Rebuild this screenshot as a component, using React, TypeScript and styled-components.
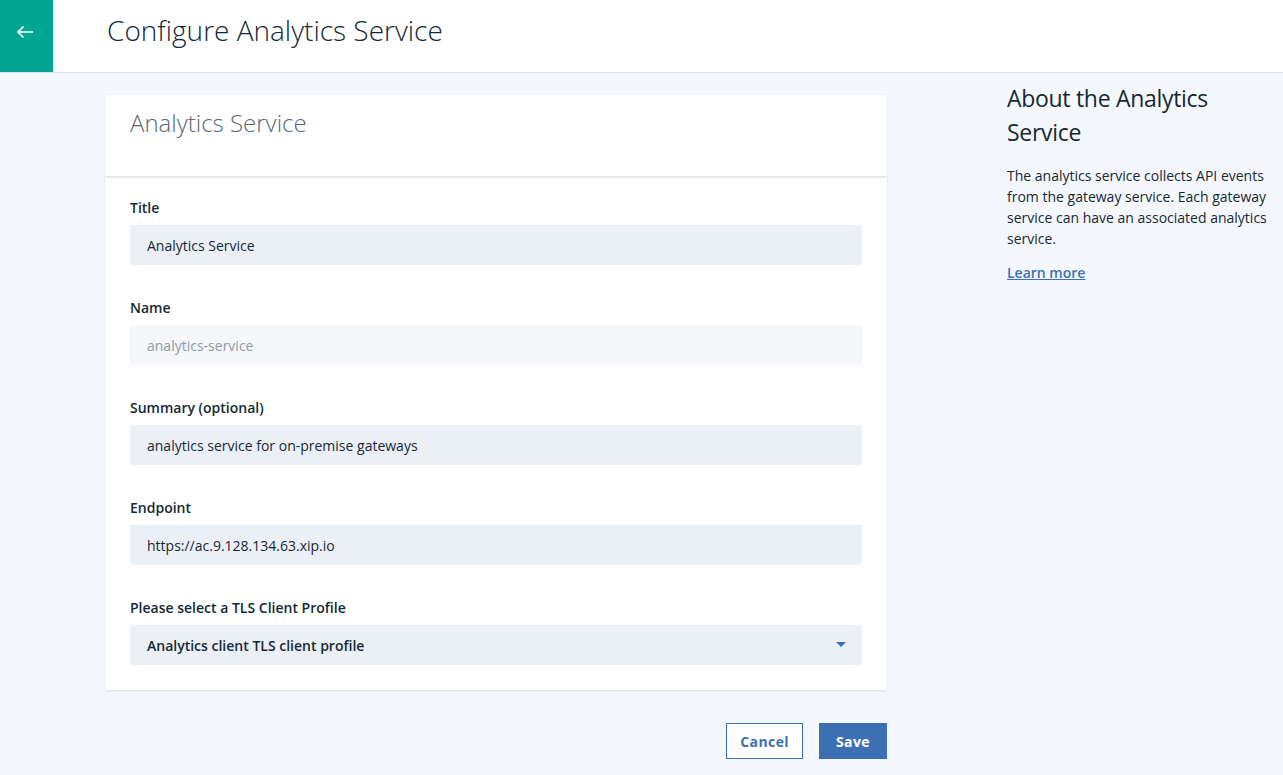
import React from 'react'
import styled, { createGlobalStyle } from 'styled-components'

const GlobalStyle = createGlobalStyle`
  html, body {
    margin: 0;
    padding: 0;
    background: #f4f7fb;
    font-family: "Open Sans", "Noto Sans", sans-serif;
    color: #152935;
  }
  * {
    box-sizing: border-box;
  }
`

const Header = styled.header`
  display: flex;
  align-items: center;
  height: 73px;
  background: #ffffff;
  border-bottom: 1px solid #dfe3e6;
`

const BackButton = styled.button`
  display: flex;
  align-items: center;
  justify-content: center;
  width: 53px;
  height: 72px;
  padding: 0 4px 8px 0;
  border: none;
  background: #00a68f;
  cursor: pointer;
`

const PageTitle = styled.h1`
  margin: 0 0 12px 54px;
  font-size: 28px;
  font-weight: 300;
  color: #152935;
`

const Main = styled.main`
  display: flex;
  align-items: flex-start;
  padding: 0 13px 0 105px;
`

const LeftColumn = styled.div`
  width: 782px;
  padding-top: 22px;
`

const Card = styled.section`
  background: #ffffff;
  box-shadow: 0 1px 2px rgba(0, 0, 0, 0.1);
`

const CardHeader = styled.div`
  height: 83px;
  padding: 11px 25px 0;
  border-bottom: 2px solid #e6e9ec;
`

const CardTitle = styled.h2`
  margin: 0;
  font-size: 24px;
  font-weight: 300;
  color: #5a6872;
`

const CardBody = styled.div`
  padding: 21px 25px 25px;
`

const Field = styled.div`
  margin-bottom: 34px;
  &:last-child {
    margin-bottom: 0;
  }
`

const Label = styled.label`
  display: block;
  margin-bottom: 8px;
  font-size: 14px;
  line-height: 18px;
  font-weight: 600;
  color: #152935;
`

const Input = styled.input<{ $muted?: boolean }>`
  display: block;
  width: 100%;
  height: 40px;
  padding: 0 17px;
  border: none;
  outline: none;
  font-family: inherit;
  font-size: 14px;
  color: ${(p) => (p.$muted ? '#8c9ba5' : '#152935')};
  background: ${(p) => (p.$muted ? '#f5f7fa' : '#ebf0f7')};
`

const Select = styled.div`
  display: flex;
  align-items: center;
  justify-content: space-between;
  height: 40px;
  padding: 0 16px 0 17px;
  background: #ebf0f7;
  font-size: 14px;
  font-weight: 600;
  color: #152935;
`

const Actions = styled.div`
  display: flex;
  justify-content: flex-end;
  gap: 16px;
  margin-top: 33px;
`

const Button = styled.button<{ $primary?: boolean }>`
  height: 36px;
  padding: ${(p) => (p.$primary ? '0 16px' : '0 13px')};
  font-family: inherit;
  font-size: 14px;
  font-weight: 700;
  letter-spacing: 0.4px;
  cursor: pointer;
  border: 1px solid #3d70b2;
  color: ${(p) => (p.$primary ? '#ffffff' : '#3d70b2')};
  background: ${(p) => (p.$primary ? '#3d70b2' : '#ffffff')};
`

const Aside = styled.aside`
  flex: 1;
  margin-left: 120px;
  padding-top: 8px;
`

const AsideTitle = styled.h2`
  margin: 0 0 16px;
  font-size: 23px;
  line-height: 34px;
  letter-spacing: -0.3px;
  font-weight: 400;
  color: #152935;
`

const AsideText = styled.p`
  margin: 0 0 12px;
  font-size: 14px;
  line-height: 21px;
  color: #152935;
`

const LearnMore = styled.a`
  font-size: 14px;
  font-weight: 600;
  color: #3d70b2;
  text-decoration: underline;
`

const fields = [
  { label: 'Title', value: 'Analytics Service' },
  { label: 'Name', value: 'analytics-service', muted: true },
  { label: 'Summary (optional)', value: 'analytics service for on-premise gateways' },
  { label: 'Endpoint', value: 'https://ac.9.128.134.63.xip.io' },
]

const App = () => {
  return (
    <>
      <GlobalStyle />
      <Header>
        <BackButton aria-label="Back">
          <svg width="18" height="14" viewBox="0 0 18 14" fill="none">
            <path d="M17 7H2M7.5 1.5L2 7l5.5 5.5" stroke="#ffffff" strokeWidth="1.6" />
          </svg>
        </BackButton>
        <PageTitle>Configure Analytics Service</PageTitle>
      </Header>
      <Main>
        <LeftColumn>
          <Card>
            <CardHeader>
              <CardTitle>Analytics Service</CardTitle>
            </CardHeader>
            <CardBody>
              {fields.map((f) => (
                <Field key={f.label}>
                  <Label>{f.label}</Label>
                  <Input defaultValue={f.value} $muted={f.muted} readOnly={f.muted} />
                </Field>
              ))}
              <Field>
                <Label>Please select a TLS Client Profile</Label>
                <Select>
                  Analytics client TLS client profile
                  <svg width="10" height="6" viewBox="0 0 10 6">
                    <path d="M0 0h10L5 5z" fill="#3d70b2" />
                  </svg>
                </Select>
              </Field>
            </CardBody>
          </Card>
          <Actions>
            <Button>Cancel</Button>
            <Button $primary>Save</Button>
          </Actions>
        </LeftColumn>
        <Aside>
          <AsideTitle>About the Analytics Service</AsideTitle>
          <AsideText>
            The analytics service collects API events from the gateway service. Each gateway
            service can have an associated analytics service.
          </AsideText>
          <LearnMore href="#">Learn more</LearnMore>
        </Aside>
      </Main>
    </>
  )
}

export default App
